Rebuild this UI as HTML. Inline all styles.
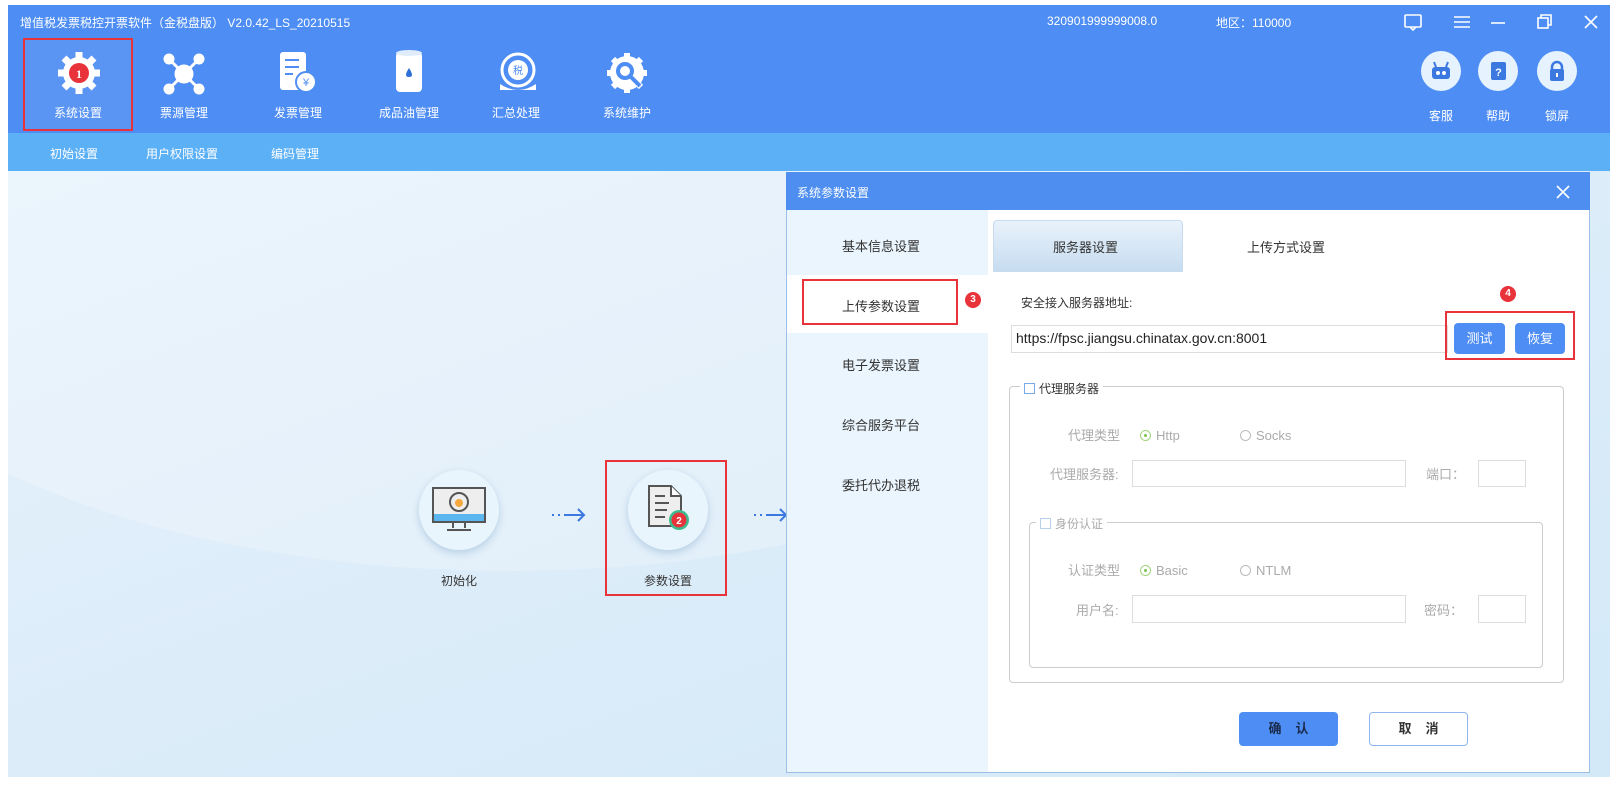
<!DOCTYPE html>
<html><head><meta charset="utf-8"><style>
*{margin:0;padding:0;box-sizing:border-box}
body{width:1622px;height:789px;background:#fff;position:relative;overflow:hidden;font-family:"Liberation Sans","Noto Sans CJK SC",sans-serif;font-size:13px;color:#333}
.a{position:absolute}
.top{left:8px;top:5px;width:1602px;height:128px;background:#4e8df3}
.sub{left:8px;top:133px;width:1602px;height:38px;background:#5cb0f6}
.main{left:8px;top:171px;width:1602px;height:606px;background:linear-gradient(160deg,#e6f2fb 0%,#dcecf9 50%,#d3e9f8 100%);overflow:hidden}
.wt{color:#fff;font-size:12px}
.lbl{color:#fff;font-size:12px;width:100px;text-align:center}
.rb{border:2px solid #e8333a}
.badge{width:16px;height:16px;border-radius:50%;background:#e8333a;color:#fff;font-size:10px;text-align:center;line-height:16px;font-weight:bold}
.circ{width:80px;height:80px;border-radius:50%;background:#e9f5fd;box-shadow:0 3px 8px rgba(80,130,180,.3)}
.dlg{left:786px;top:172px;width:804px;height:601px;background:#fff;border:1px solid #9cc0e8}
.nav{color:#333;font-size:13px}
.gray{color:#aaa;font-size:13px;line-height:16px}
.inp{border:1px solid #ddd;background:#fff}
.btn{background:#4e8df3;color:#fff;border-radius:4px;text-align:center;font-size:13px}
.rad{display:inline-block;width:11px;height:11px;border:1px solid #bbb;border-radius:50%;vertical-align:-1px;margin-right:5px;position:relative}
.rad.on::after{content:"";position:absolute;left:3px;top:3px;width:3px;height:3px;border-radius:50%;background:#7cc24d}
.rad.on{border-color:#9fd47a}
</style></head><body>
<div class="a top"></div>
<div class="a sub"></div>
<div class="a main"><div class="a" style="left:-200px;top:-250px;width:1400px;height:650px;border-radius:50%;background:rgba(255,255,255,.22)"></div></div>

<div class="a wt" style="left:20px;top:14px">增值税发票税控开票软件（金税盘版） V2.0.42_LS_20210515</div>
<div class="a wt" style="left:1047px;top:14px">320901999999008.0</div>
<div class="a wt" style="left:1216px;top:14px">地区：110000</div>
<svg class="a" style="left:1400px;top:12px" width="210" height="22" stroke="#fff" fill="none" stroke-width="1.6">
<rect x="5" y="3" width="16" height="12" rx="1"/><path d="M10 15 l3 3 l3-3"/>
<path d="M54 5h16M54 10h16M54 15h16"/>
<path d="M91 11h14"/>
<rect x="138" y="6" width="10" height="10"/><path d="M141 6V3h10v10h-3"/>
<path d="M185 4l12 12M197 4l-12 12"/>
</svg>
<div class="a rb" style="left:23px;top:38px;width:110px;height:93px;background:rgba(255,255,255,.08)"></div>
<svg class="a" style="left:56px;top:50px" width="46" height="46"><g fill="#fff"><circle cx="23" cy="23" r="16"/><g stroke="#fff" stroke-width="7"><path d="M23 2v42M2 23h42M8 8l30 30M38 8L8 38"/></g></g><circle cx="23" cy="23" r="10" fill="#e8333a"/><text x="23" y="28" fill="#fff" font-size="12" text-anchor="middle" font-weight="bold" font-family="Liberation Serif">1</text></svg>
<div class="a lbl" style="left:28px;top:104px">系统设置</div>
<svg class="a" style="left:162px;top:52px" width="44" height="44" fill="#fff" stroke="#fff" stroke-width="3"><path d="M8 8L36 36M36 8L8 36"/><circle cx="22" cy="22" r="8"/><circle cx="7" cy="7" r="4"/><circle cx="37" cy="7" r="4"/><circle cx="7" cy="37" r="4"/><circle cx="37" cy="37" r="4"/></svg>
<div class="a lbl" style="left:134px;top:104px">票源管理</div>
<svg class="a" style="left:276px;top:50px" width="44" height="46"><rect x="4" y="2" width="26" height="38" rx="3" fill="#fff"/><path d="M9 10h14M9 17h14M9 24h8" stroke="#4e8df3" stroke-width="2"/><circle cx="30" cy="32" r="10" fill="#fff" stroke="#4e8df3" stroke-width="2"/><text x="30" y="36" font-size="11" text-anchor="middle" fill="#4e8df3">¥</text></svg>
<div class="a lbl" style="left:248px;top:104px">发票管理</div>
<svg class="a" style="left:394px;top:48px" width="30" height="48"><rect x="2" y="4" width="26" height="40" rx="4" fill="#fff"/><ellipse cx="15" cy="5" rx="13" ry="3" fill="#e0ecfb"/><path d="M15 20c-4 6-4 9 0 9s4-3 0-9z" fill="#2f6fd8"/></svg>
<div class="a lbl" style="left:359px;top:104px">成品油管理</div>
<svg class="a" style="left:496px;top:50px" width="44" height="46"><circle cx="22" cy="20" r="16" fill="none" stroke="#fff" stroke-width="3"/><circle cx="22" cy="20" r="10" fill="#fff"/><text x="22" y="24" font-size="10" text-anchor="middle" fill="#4e8df3">税</text><path d="M4 34q18 12 36 0v6H4z" fill="#fff"/></svg>
<div class="a lbl" style="left:466px;top:104px">汇总处理</div>
<svg class="a" style="left:604px;top:50px" width="46" height="46"><g fill="#fff"><circle cx="23" cy="23" r="17"/><g stroke="#fff" stroke-width="6"><path d="M23 3v40M3 23h40M9 9l28 28M37 9L9 37"/></g></g><circle cx="21" cy="21" r="9" fill="#4e8df3"/><circle cx="21" cy="21" r="5" fill="#fff"/><path d="M26 26l10 10" stroke="#4e8df3" stroke-width="4"/></svg>
<div class="a lbl" style="left:577px;top:104px">系统维护</div>
<div class="a" style="left:1421px;top:51px;width:40px;height:40px;border-radius:50%;background:#e6f2fd"></div>
<svg class="a" style="left:1429px;top:59px" width="24" height="24"><rect x="3" y="8" width="18" height="12" rx="3" fill="#3b78e0"/><path d="M7 8L5 3M17 8l2-5" stroke="#3b78e0" stroke-width="2"/><circle cx="9" cy="14" r="2" fill="#fff"/><circle cx="15" cy="14" r="2" fill="#fff"/></svg>
<div class="a lbl" style="left:1391px;top:107px">客服</div>
<div class="a" style="left:1478px;top:51px;width:40px;height:40px;border-radius:50%;background:#e6f2fd"></div>
<svg class="a" style="left:1486px;top:59px" width="24" height="24"><rect x="5" y="3" width="15" height="18" rx="2" fill="#3b78e0"/><text x="12.5" y="17" font-size="11" text-anchor="middle" fill="#fff" font-weight="bold">?</text></svg>
<div class="a lbl" style="left:1448px;top:107px">帮助</div>
<div class="a" style="left:1537px;top:51px;width:40px;height:40px;border-radius:50%;background:#e6f2fd"></div>
<svg class="a" style="left:1545px;top:59px" width="24" height="24"><path d="M7 11V8a5 5 0 0 1 10 0v3" fill="none" stroke="#3b78e0" stroke-width="2.5"/><rect x="5" y="10" width="14" height="12" rx="2" fill="#3b78e0"/><rect x="11" y="14" width="2" height="4" fill="#fff"/></svg>
<div class="a lbl" style="left:1507px;top:107px">锁屏</div>
<div class="a wt" style="left:50px;top:145px">初始设置</div>
<div class="a wt" style="left:146px;top:145px">用户权限设置</div>
<div class="a wt" style="left:271px;top:145px">编码管理</div>

<div class="a circ" style="left:419px;top:470px"></div>
<svg class="a" style="left:431px;top:486px" width="56" height="50"><rect x="2" y="2" width="52" height="34" fill="#eee" stroke="#555" stroke-width="2"/><rect x="3" y="28" width="50" height="7" fill="#5bb6ef"/><path d="M22 36v6M34 36v6M16 44h24" stroke="#555" stroke-width="2"/><circle cx="28" cy="16" r="9" fill="none" stroke="#555" stroke-width="2"/><circle cx="28" cy="17" r="4" fill="#f6a83c"/></svg>
<div class="a" style="left:439px;top:572px;width:40px;text-align:center;font-size:12px">初始化</div>
<svg class="a" style="left:550px;top:505px" width="40" height="20" stroke="#3b78e0" stroke-width="2" fill="none"><path d="M2 10h2M8 10h2M14 10h20M28 4l6 6-6 6"/></svg>
<div class="a circ" style="left:628px;top:470px"></div>
<svg class="a" style="left:645px;top:484px" width="50" height="50"><path d="M4 2h22l10 10v30H4z" fill="#eee" stroke="#555" stroke-width="2"/><path d="M26 2v10h10" fill="#fff" stroke="#555" stroke-width="2"/><path d="M10 12h10M10 19h14M10 26h12M10 33h10" stroke="#555" stroke-width="2"/><circle cx="34" cy="36" r="10" fill="#3dbb8e"/><circle cx="34" cy="36" r="7.5" fill="#e8333a"/><text x="34" y="40" font-size="10" fill="#fff" text-anchor="middle" font-weight="bold">2</text></svg>
<div class="a" style="left:640px;top:572px;width:56px;text-align:center;font-size:12px">参数设置</div>
<div class="a rb" style="left:605px;top:460px;width:122px;height:136px"></div>
<svg class="a" style="left:752px;top:505px" width="36" height="20" stroke="#3b78e0" stroke-width="2" fill="none"><path d="M2 10h2M8 10h2M14 10h20M28 4l6 6-6 6"/></svg>

<div class="a dlg"></div>
<div class="a" style="left:786px;top:172px;width:804px;height:38px;background:#4d8ef0"></div>
<div class="a wt" style="left:797px;top:184px">系统参数设置</div>
<svg class="a" style="left:1556px;top:185px" width="14" height="14" stroke="#fff" stroke-width="1.6"><path d="M1 1l12 12M13 1L1 13"/></svg>
<div class="a" style="left:787px;top:210px;width:201px;height:562px;background:#eaf5fd"></div>
<div class="a" style="left:787px;top:275px;width:201px;height:58px;background:#fff"></div>
<div class="a nav" style="left:842px;top:236px">基本信息设置</div>
<div class="a nav" style="left:842px;top:296px">上传参数设置</div>
<div class="a rb" style="left:802px;top:279px;width:156px;height:46px"></div>
<div class="a badge" style="left:965px;top:292px">3</div>
<div class="a nav" style="left:842px;top:355px">电子发票设置</div>
<div class="a nav" style="left:842px;top:415px">综合服务平台</div>
<div class="a nav" style="left:842px;top:475px">委托代办退税</div>
<div class="a" style="left:993px;top:220px;width:190px;height:52px;background:linear-gradient(#e8f2fb,#c7dcf0);border:1px solid #c8dbef;border-radius:4px 4px 0 0"></div>
<div class="a nav" style="left:1053px;top:237px">服务器设置</div>
<div class="a nav" style="left:1247px;top:237px">上传方式设置</div>
<div class="a" style="left:1021px;top:294px;font-size:12px">安全接入服务器地址:</div>
<div class="a inp" style="left:1011px;top:325px;width:437px;height:28px"></div>
<div class="a" style="left:1016px;top:330px;font-size:14px;color:#222">https://fpsc.jiangsu.chinatax.gov.cn:8001</div>
<div class="a badge" style="left:1500px;top:286px">4</div>
<div class="a rb" style="left:1445px;top:311px;width:130px;height:49px"></div>
<div class="a btn" style="left:1454px;top:323px;width:51px;height:31px;line-height:31px">测试</div>
<div class="a btn" style="left:1515px;top:323px;width:50px;height:31px;line-height:31px">恢复</div>

<div class="a" style="left:1009px;top:386px;width:555px;height:297px;border:1px solid #ccc;border-radius:4px"></div>
<div class="a" style="left:1020px;top:380px;background:#fff;padding:0 4px;font-size:12px"><span style="display:inline-block;width:11px;height:11px;border:1px solid #7aa8e8;vertical-align:-1px;margin-right:4px"></span>代理服务器</div>
<div class="a gray" style="left:1068px;top:428px">代理类型</div>
<div class="a gray" style="left:1140px;top:428px"><span class="rad on"></span>Http</div>
<div class="a gray" style="left:1240px;top:428px"><span class="rad"></span>Socks</div>
<div class="a gray" style="left:1050px;top:467px">代理服务器:</div>
<div class="a inp" style="left:1132px;top:460px;width:274px;height:27px"></div>
<div class="a gray" style="left:1426px;top:467px">端口：</div>
<div class="a inp" style="left:1478px;top:460px;width:48px;height:27px"></div>

<div class="a" style="left:1029px;top:522px;width:514px;height:146px;border:1px solid #ccc;border-radius:4px"></div>
<div class="a" style="left:1036px;top:515px;background:#fff;padding:0 4px;font-size:12px;color:#aaa"><span style="display:inline-block;width:11px;height:11px;border:1px solid #b7d0ee;vertical-align:-1px;margin-right:4px"></span>身份认证</div>
<div class="a gray" style="left:1068px;top:563px">认证类型</div>
<div class="a gray" style="left:1140px;top:563px"><span class="rad on"></span>Basic</div>
<div class="a gray" style="left:1240px;top:563px"><span class="rad"></span>NTLM</div>
<div class="a gray" style="left:1076px;top:603px">用户名:</div>
<div class="a inp" style="left:1132px;top:595px;width:274px;height:28px"></div>
<div class="a gray" style="left:1424px;top:603px">密码：</div>
<div class="a inp" style="left:1478px;top:595px;width:48px;height:28px"></div>

<div class="a btn" style="left:1239px;top:712px;width:99px;height:34px;line-height:34px;font-weight:bold;color:#1a2a4a;letter-spacing:14px;padding-left:14px">确认</div>
<div class="a" style="left:1369px;top:712px;width:99px;height:34px;line-height:32px;border:1px solid #8fb5ef;border-radius:4px;text-align:center;font-weight:bold;letter-spacing:14px;padding-left:14px">取消</div>
</body></html>
